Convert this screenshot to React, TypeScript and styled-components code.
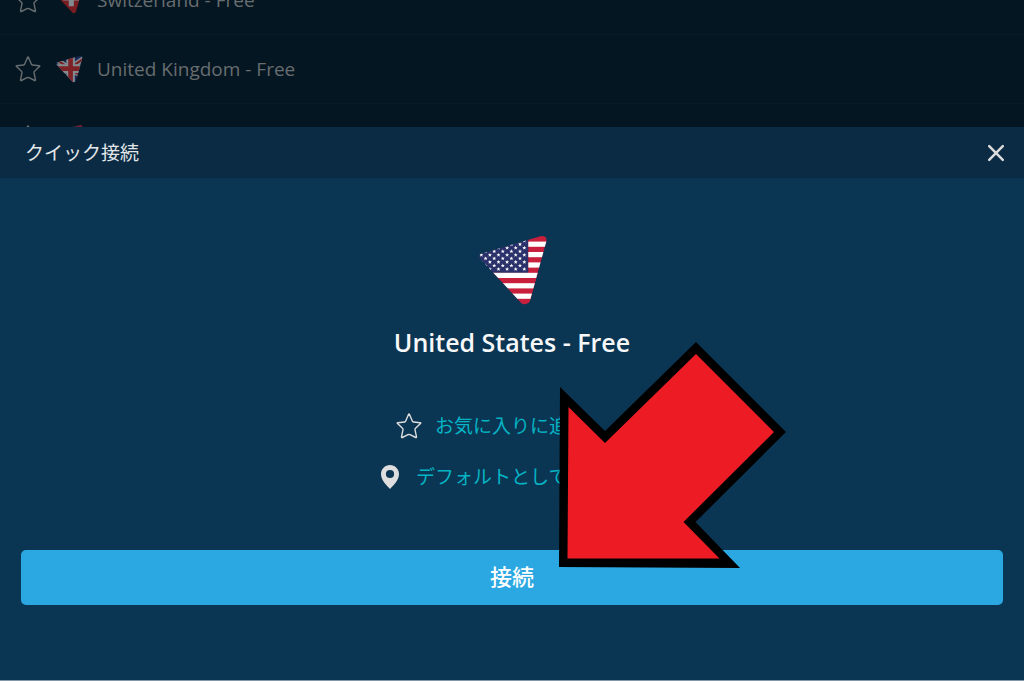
import React from "react";
import styled, { createGlobalStyle } from "styled-components";

const GlobalStyle = createGlobalStyle`
  *, *::before, *::after { box-sizing: border-box; }
  body {
    margin: 0;
    background: #0b3653;
    font-family: "Open Sans", "Noto Sans CJK JP", sans-serif;
  }
`;

const Page = styled.div`
  display: flex;
  flex-direction: column;
  min-height: 100vh;
`;

const Backdrop = styled.div`
  height: 127px;
  overflow: hidden;
  background: #041621;
`;

const ServerList = styled.ul`
  list-style: none;
  margin: -34px 0 0;
  padding: 0;
`;

const ServerRow = styled.li`
  display: flex;
  align-items: center;
  height: 69px;
  padding: 0 15px;
  border-bottom: 1px solid #071b28;
  color: #686d70;
  font-size: 19px;
  line-height: 28px;
`;

const RowFlag = styled.span`
  display: flex;
  width: 28px;
  margin: 0 14px;
  opacity: 0.5;
`;

const Sheet = styled.section`
  position: relative;
  flex: 1;
  display: flex;
  flex-direction: column;
  background: #0b3653;
  border-bottom: 1px solid #8298a8;
`;

const SheetHeader = styled.header`
  display: flex;
  align-items: center;
  justify-content: space-between;
  height: 51px;
  padding: 0 18px 0 25px;
  background: #0a2b43;
`;

const SheetTitle = styled.h2`
  margin: 0;
  color: #e4e7ea;
  font-size: 19px;
  line-height: 28px;
  font-weight: 400;
`;

const CloseButton = styled.button`
  display: flex;
  padding: 0;
  border: 0;
  background: none;
  color: #dcdcdc;
  cursor: pointer;
`;

const SheetBody = styled.div`
  display: flex;
  flex-direction: column;
  align-items: center;
  padding: 56px 21px 75px;
`;

const ServerName = styled.h1`
  margin: 20px 0 43px;
  color: #f7f8f9;
  font-size: 25px;
  line-height: 32px;
  font-weight: 600;
`;

const ActionButton = styled.button<{ $gap: number; $width: number }>`
  display: flex;
  align-items: center;
  gap: ${(p) => p.$gap}px;
  width: ${(p) => p.$width}px;
  height: 51px;
  padding: 0 0 2px;
  border: 0;
  background: none;
  color: #04b3c4;
  font-family: inherit;
  font-size: 19px;
  line-height: 28px;
  white-space: nowrap;
  cursor: pointer;
`;

const ConnectButton = styled.button`
  width: 100%;
  height: 55px;
  margin-top: 47px;
  padding: 0 0 4px;
  border: 0;
  border-radius: 5px;
  background: #2ba8e1;
  color: #fff;
  font-family: inherit;
  font-size: 22px;
  line-height: 32px;
  font-weight: 500;
  cursor: pointer;
`;

const Pointer = styled.svg`
  position: absolute;
  top: 214px;
  left: calc(50% + 47px);
  pointer-events: none;
`;

const StarIcon = ({ color }: { color: string }) => (
  <svg width="26" height="26" viewBox="0 0 26 26" fill="none" aria-hidden="true">
    <path
      d="M12.600 1.200Q13 .5 13.400 1.200L16.300 8.100Q16.600 8.900 17.400 9L24.200 9.700Q25.200 9.900 24.500 10.600L19.500 15.200Q18.800 15.800 19 16.700L20.500 23.900Q20.600 24.900 19.700 24.500L14 21.700Q13 21.200 12 21.700L6.300 24.500Q5.400 24.900 5.500 23.900L7 16.700Q7.200 15.800 6.500 15.200L1.500 10.600Q.8 9.900 1.800 9.700L8.600 9Q9.400 8.900 9.700 8.100Z"
      stroke={color}
      strokeWidth="1.4"
      strokeLinejoin="round"
    />
  </svg>
);

const PinIcon = () => (
  <svg width="18" height="24" viewBox="0 0 18 24" aria-hidden="true">
    <path
      fillRule="evenodd"
      fill="#dedede"
      d="M9 0C4 0 0 4 0 9C0 15.2 5.6 20.5 9 24C12.4 20.5 18 15.2 18 9C18 4 14 0 9 0ZM9 4.900A4.100 4.100 0 1 1 9 13.100A4.100 4.100 0 1 1 9 4.900Z"
    />
  </svg>
);

const CloseIcon = () => (
  <svg width="20" height="20" viewBox="0 0 20 20" aria-hidden="true">
    <path d="M3.200 3.200L16.800 16.800M16.800 3.200L3.200 16.800" stroke="currentColor" strokeWidth="2.5" strokeLinecap="round" />
  </svg>
);

const TRIANGLE = "M5.500 19.500L64.500 2.200Q71.500 1.400 70.300 7.500L54 66.500Q51 72 45.700 69.500L4.500 25Q1 21 5.500 19.500Z";

const STRIPE = 5.2;
const STRIPE_TOP = 2.4;
const CANTON_BOTTOM = STRIPE_TOP + 7 * STRIPE;

const UsFlag = ({ size, id }: { size: number; id: string }) => (
  <svg width={size} height={size} viewBox="0 0 72 72" aria-hidden="true">
    <clipPath id={id}>
      <path d={TRIANGLE} />
    </clipPath>
    <g clipPath={`url(#${id})`}>
      <rect width="52.3" height={CANTON_BOTTOM} fill="#2b316b" />
      <rect x="52.3" width="20" height="72" fill="#c8203c" />
      <rect y={CANTON_BOTTOM} width="72" height="40" fill="#c8203c" />
      {[1, 3, 5, 7, 9, 11].map((n) => (
        <rect
          key={n}
          x={n < 7 ? 52.3 : 0}
          y={STRIPE_TOP + n * STRIPE}
          width="72"
          height={STRIPE}
          fill="#fff"
        />
      ))}
      {[0, 1, 2, 3, 4, 5, 6, 7, 8].map((row) =>
        Array.from({ length: row % 2 ? 5 : 6 }, (_, col) => (
          <path
            key={`${row}-${col}`}
            transform={`translate(${5.3 + col * 8.6 + (row % 2 ? 4.3 : 0)} ${6.7 + row * 3.55}) scale(1.1)`}
            d="M0-1.800L.5-.6L1.800-.6L.8.3L1.200 1.600L0 .8L-1.200 1.600L-.8.3L-1.800-.6L-.5-.6Z"
            fill="#fff"
          />
        ))
      )}
    </g>
  </svg>
);

const UkFlag = () => (
  <svg width="28" height="28" viewBox="0 0 72 72" aria-hidden="true">
    <clipPath id="uk">
      <path d={TRIANGLE} />
    </clipPath>
    <g clipPath="url(#uk)">
      <rect width="72" height="72" fill="#2b3a86" />
      <path d="M-14 0L88 68M88 0L-14 68" stroke="#fff" strokeWidth="13" />
      <path d="M-14 0L88 68M88 0L-14 68" stroke="#f02c2c" strokeWidth="6" />
      <path d="M40 0V72M0 35H72" stroke="#fff" strokeWidth="22" />
      <path d="M40 0V72M0 35H72" stroke="#f52c2c" strokeWidth="12" />
    </g>
  </svg>
);

const SwissFlag = () => (
  <svg width="28" height="28" viewBox="0 0 72 72" aria-hidden="true">
    <clipPath id="ch">
      <path d={TRIANGLE} />
    </clipPath>
    <g clipPath="url(#ch)">
      <rect width="72" height="72" fill="#f02424" />
      <path d="M42 10V52M21 31H63" stroke="#fff" strokeWidth="13" />
    </g>
  </svg>
);

const servers = [
  { name: "Switzerland - Free", flag: <SwissFlag /> },
  { name: "United Kingdom - Free", flag: <UkFlag /> },
  { name: "United States - Free", flag: <UsFlag size={28} id="us-row" /> },
];

export default function App() {
  return (
    <Page lang="ja">
      <GlobalStyle />
      <Backdrop>
        <ServerList>
          {servers.map((server) => (
            <ServerRow key={server.name}>
              <StarIcon color="#686d70" />
              <RowFlag>{server.flag}</RowFlag>
              {server.name}
            </ServerRow>
          ))}
        </ServerList>
      </Backdrop>
      <Sheet>
        <SheetHeader>
          <SheetTitle>クイック接続</SheetTitle>
          <CloseButton type="button" aria-label="閉じる">
            <CloseIcon />
          </CloseButton>
        </SheetHeader>
        <SheetBody>
          <UsFlag size={72} id="us-main" />
          <ServerName>United States - Free</ServerName>
          <ActionButton type="button" $gap={13} $width={232}>
            <StarIcon color="#dedede" />
            お気に入りに追加
          </ActionButton>
          <ActionButton type="button" $gap={17} $width={262}>
            <PinIcon />
            デフォルトとして設定
          </ActionButton>
          <ConnectButton type="button">接続</ConnectButton>
        </SheetBody>
        <Pointer width="228" height="228" viewBox="0 0 228 228" aria-hidden="true">
          <path d="M1 46L46 90L137 1L227 91L136.500 181L181 227L0 226Z" fill="#000" />
          <path d="M9.500 66L46 102L137 13L215 91L124.500 181L160.500 217.500L8.500 217.500Z" fill="#ed1c24" />
        </Pointer>
      </Sheet>
    </Page>
  );
}
